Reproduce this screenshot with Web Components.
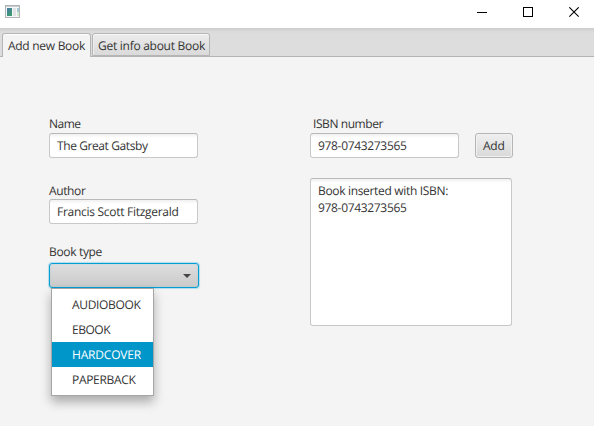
<!DOCTYPE html>
<html lang="en">
<head>
<meta charset="utf-8">
<title>Books</title>
<style>
html,body{margin:0;height:100%;overflow:hidden}
body{font:12px/16px "Open Sans","Noto Sans",sans-serif;color:#333;background:#f4f4f4;text-rendering:geometricPrecision}
</style>
</head>
<body>
<book-app></book-app>
<script>
function define(name, html, setup) {
  customElements.define(name, class extends HTMLElement {
    connectedCallback() {
      if (this.shadowRoot) return;
      this.attachShadow({mode: 'open'}).innerHTML = html;
      if (setup) setup(this, this.shadowRoot);
    }
  });
}

/* One line of text whose tracking is set so that it takes the given width. */
define('fit-text', `<style>:host{display:block;white-space:pre;height:16px;line-height:16px}span{display:inline-block}</style><span></span>`,
  (host, root) => {
    const span = root.querySelector('span');
    const text = host.getAttribute('text');
    span.textContent = text;
    const natural = span.getBoundingClientRect().width;
    span.style.letterSpacing = ((+host.getAttribute('width') - natural) / text.length) + 'px';
  });

define('title-bar', `<style>
:host{display:flex;height:28px;background:#fff;justify-content:space-between;align-items:flex-start}
svg{display:block}
.icon{margin:5px 0 0 5px}
.controls{display:flex;gap:35px;padding:7px 14px 0 0}
</style>
<svg class="icon" width="16" height="14">
<defs><linearGradient id="g" x1="0" y1="0" x2=".5" y2="1"><stop offset="0" stop-color="#477aa8"/><stop offset="1" stop-color="#3c9a70"/></linearGradient></defs>
<rect x=".5" y=".5" width="14" height="12" fill="#f5f6f7" stroke="#aeb3b6"/>
<path d="M1 1.5H14" stroke="#c8cdd0"/>
<rect x="2" y="3" width="5" height="8" fill="url(#g)"/>
<rect x="8" y="3" width="3" height="8" fill="#e0e2e4"/>
<rect x="12" y="3" width="2" height="4" fill="#a5c9d2"/><rect x="12" y="7" width="2" height="4" fill="#d5e8d2"/>
</svg>
<div class="controls">
<svg width="11" height="11"><path d="M0 5.500H10" stroke="#000"/></svg>
<svg width="11" height="11"><rect x=".5" y=".5" width="9" height="9" fill="none" stroke="#000"/></svg>
<svg width="11" height="11"><path d="M.3 .3L9.700 9.700M9.700 .3L.3 9.700" stroke="#000" stroke-width="1.100"/></svg>
</div>`);

define('tab-strip', `<style>
:host{display:flex;box-sizing:border-box;height:29px;padding:5px 0 0 2px;gap:1px;background:linear-gradient(#cbcbcb,#d9d9d9 3px,#ddd 6px);box-shadow:inset 0 -1px #b5b5b5}
</style><slot></slot>`);

define('tab-item', `<style>
:host{box-sizing:border-box;height:23px;border:1px solid #b5b5b5;border-radius:3px 3px 0 0;padding:4px 0 0 5px;background:linear-gradient(#ececec,#dadada);box-shadow:inset 0 1px #f8f8f8,inset 1px 0 #eee;display:block}
:host([selected]){background:#f4f4f4;border-bottom:0;height:24px;box-shadow:inset 0 1px #fff}
</style><slot></slot>`);

define('text-box', `<style>
:host{display:block;box-sizing:border-box;border:1px solid #c8c8c8;border-top-color:#b9b9b9;border-radius:3px;background:linear-gradient(#f0f0f0,#fff 4px);padding:4px 7px}
</style><slot></slot>`);

define('push-button', `<style>
:host{display:block;box-sizing:border-box;width:38px;height:25px;border:1px solid #b5b5b5;border-radius:3px;background:linear-gradient(#efefef,#d9d9d9);box-shadow:inset 0 0 0 1px #f1f1f1;padding:4px 7px}
</style><slot></slot>`);

define('menu-option', `<style>
:host{display:block;height:25px;box-sizing:border-box;padding:5px 0 0 20px}
:host([selected]){background:#0096c9;color:#fff}
</style><slot></slot>`);

define('combo-box', `<style>
:host{display:block;position:relative;width:150px;height:25px}
.button{box-sizing:border-box;height:25px;border:1px solid #039ed3;border-radius:3px;background:linear-gradient(#dedede,#cacaca);box-shadow:0 0 1px 1px #b4dcea,inset 0 0 1px #67bddc;display:flex;justify-content:flex-end;align-items:center;padding-right:7px}
svg{display:block}
.menu{position:absolute;left:2px;top:25px;box-sizing:border-box;width:103px;height:108px;border:1px solid #a6a6a6;background:#fff;padding:3px 0;box-shadow:0 6px 10px rgba(0,0,0,.3)}
</style>
<div class="button"><svg width="8" height="4"><path d="M0 0H8L4 4Z" fill="#444"/></svg></div>
<div class="menu"><slot></slot></div>`);

define('book-form', `<style>
:host{display:grid;grid-template-columns:150px 203px;column-gap:111px;padding:59px 0 0 49px}
.col{display:flex;flex-direction:column}
.row{display:flex;gap:16px}
.field{width:149px;height:25px}
.name{margin-top:1px}
.author-label{margin-top:25px}
.type-label{margin-top:20px}
combo-box{margin-top:3px}
.isbn-label{margin-left:3px}
.row{margin-top:1px}
.output{width:202px;height:148px;margin-top:20px}
.output fit-text{margin-bottom:1px}
</style>
<div class="col">
<fit-text text="Name" width="31.500"></fit-text>
<text-box class="field name"><fit-text text="The Great Gatsby" width="90.500"></fit-text></text-box>
<fit-text class="author-label" text="Author" width="36.500"></fit-text>
<text-box class="field"><fit-text text="Francis Scott Fitzgerald" width="121.500"></fit-text></text-box>
<fit-text class="type-label" text="Book type" width="53"></fit-text>
<combo-box>
<menu-option><fit-text text="AUDIOBOOK" width="68.500"></fit-text></menu-option>
<menu-option><fit-text text="EBOOK" width="38"></fit-text></menu-option>
<menu-option selected><fit-text text="HARDCOVER" width="69"></fit-text></menu-option>
<menu-option><fit-text text="PAPERBACK" width="63.500"></fit-text></menu-option>
</combo-box>
</div>
<div class="col">
<fit-text class="isbn-label" text="ISBN number" width="70"></fit-text>
<div class="row">
<text-box class="field"><fit-text text="978-0743273565" width="88.500"></fit-text></text-box>
<push-button><fit-text text="Add" width="21.500"></fit-text></push-button>
</div>
<text-box class="output"><fit-text text="Book inserted with ISBN:" width="130"></fit-text><fit-text text="978-0743273565" width="88.500"></fit-text></text-box>
</div>`);

define('book-app', `<style>
:host{display:block;height:426px;background:#f4f4f4}
</style>
<title-bar></title-bar>
<tab-strip>
<tab-item selected style="width:89px"><fit-text text="Add new Book" width="77"></fit-text></tab-item>
<tab-item style="width:118px"><fit-text text="Get info about Book" width="107"></fit-text></tab-item>
</tab-strip>
<book-form></book-form>`);
</script>
</body>
</html>
